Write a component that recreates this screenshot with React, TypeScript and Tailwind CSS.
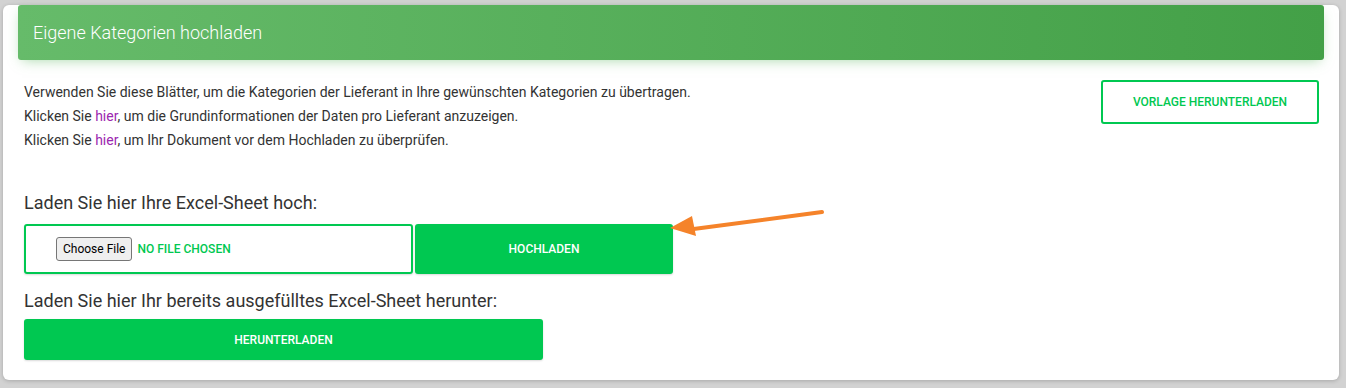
import React from 'react';

function Arrow() {
  return (
    <svg width="160" height="30" viewBox="0 0 160 30" className="absolute left-[666px] top-[206px]">
      <line x1="156" y1="6" x2="20" y2="24" stroke="#f5832a" strokeWidth="4" strokeLinecap="round" />
      <polygon points="4,26 26,14 30,34" fill="#f5832a" transform="translate(0,-4)" />
    </svg>
  );
}

export default function App() {
  return (
    <div className="relative min-h-[388px] bg-[#d2d2d2] pl-[3px] pr-[7px] pt-[25px] pb-[8px] font-['Roboto',sans-serif] text-[#3c4858]">
      <div className="rounded-md bg-white pb-[20px] shadow-[0_1px_4px_rgba(0,0,0,0.2)]">
        <div className="mx-[15px] -mt-[20px] flex h-[55px] items-center rounded-[3px] bg-gradient-to-r from-[#66bb6a] to-[#43a047] px-[15px] shadow-[0_4px_12px_-4px_rgba(76,175,80,0.5)]">
          <h4 className="text-[18px] font-light text-white">Eigene Kategorien hochladen</h4>
        </div>

        <div className="flex justify-between px-[21px] pt-[20px]">
          <div className="text-[14px] leading-[24px] text-[#333]">
            <p>Verwenden Sie diese Blätter, um die Kategorien der Lieferant in Ihre gewünschten Kategorien zu übertragen.</p>
            <p>
              Klicken Sie <a className="text-[#9c27b0]">hier</a>, um die Grundinformationen der Daten pro Lieferant anzuzeigen.
            </p>
            <p>
              Klicken Sie <a className="text-[#9c27b0]">hier</a>, um Ihr Dokument vor dem Hochladen zu überprüfen.
            </p>
          </div>
          <button className="mr-[-1px] h-[44px] w-[218px] rounded-[3px] border-2 border-[#00c851] bg-white text-[12px] font-medium text-[#00c851]">
            VORLAGE HERUNTERLADEN
          </button>
        </div>

        <div className="px-[21px] pt-[40px]">
          <h4 className="text-[18px] leading-[22px] text-[#333]">Laden Sie hier Ihre Excel-Sheet hoch:</h4>
          <div className="mt-[10px] flex gap-[2px]">
            <div className="flex h-[50px] w-[389px] items-center gap-[5px] rounded-[3px] border-2 border-[#00c851] pl-[30px] shadow-[0_1px_2px_rgba(0,0,0,0.15)]">
              <span className="rounded-[3px] border border-[#767676] bg-[#efefef] px-[6px] py-[2px] text-[12px] text-black">
                Choose File
              </span>
              <span className="text-[12px] font-medium text-[#00c851]">NO FILE CHOSEN</span>
            </div>
            <button className="h-[50px] w-[258px] rounded-[3px] bg-[#00c851] text-[12px] font-medium text-white shadow-[0_1px_2px_rgba(0,0,0,0.15)]">
              HOCHLADEN
            </button>
          </div>

          <h4 className="mt-[16px] text-[18px] leading-[22px] text-[#333]">
            Laden Sie hier Ihr bereits ausgefülltes Excel-Sheet herunter:
          </h4>
          <button className="mt-[7px] h-[41px] w-[519px] rounded-[3px] bg-[#00c851] text-[12px] font-medium text-white shadow-[0_1px_2px_rgba(0,0,0,0.15)]">
            HERUNTERLADEN
          </button>
        </div>
      </div>
      <Arrow />
    </div>
  );
}
